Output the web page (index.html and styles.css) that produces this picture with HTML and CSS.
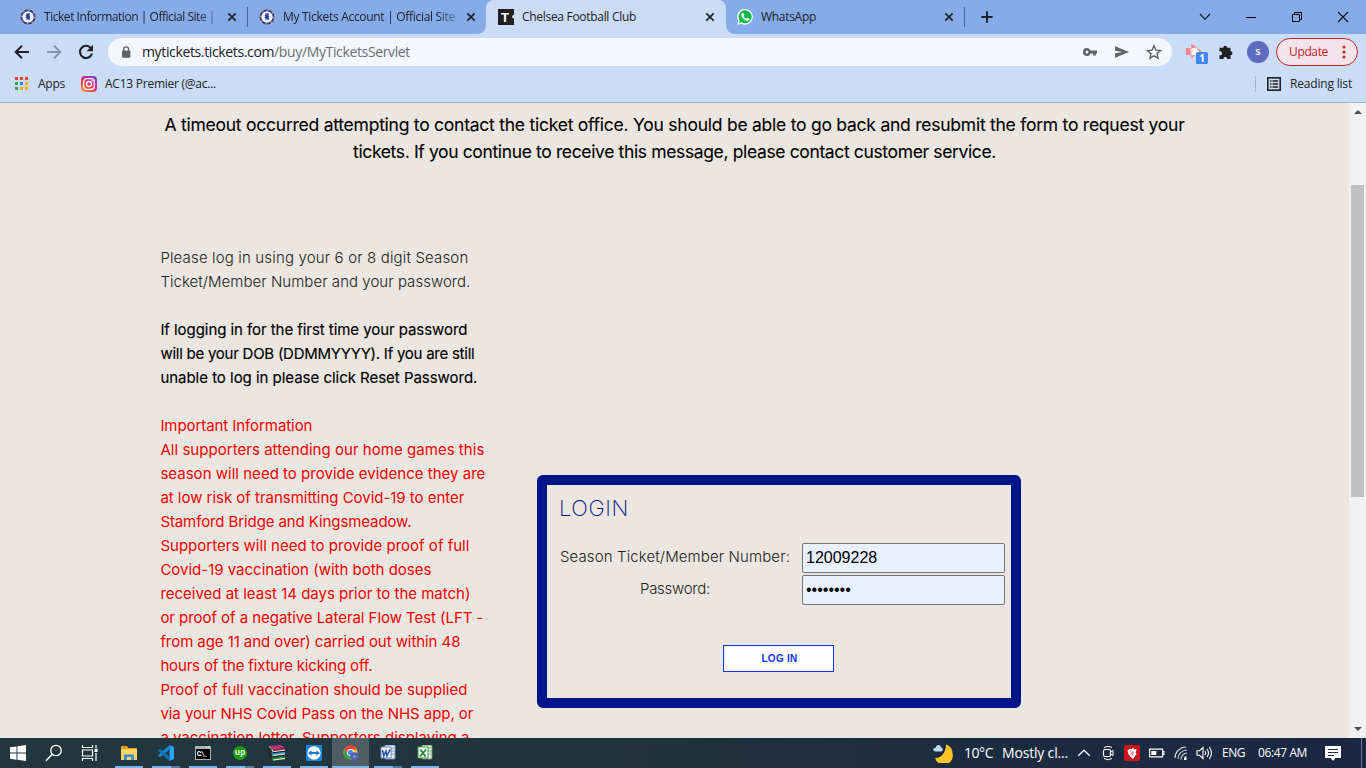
FILE: index.html
```html
<!DOCTYPE html>
<html lang="en">
<head>
<meta charset="utf-8">
<title>Chelsea Football Club</title>
<link rel="stylesheet" href="styles.css">
</head>
<body>
<svg class="defs" width="0" height="0">
  <symbol id="close" viewBox="0 0 10 10"><path d="M1.3 1.3l7.4 7.4M8.7 1.3L1.3 8.7" stroke="#202124" stroke-width="1.7"/></symbol>
  <symbol id="crest" viewBox="0 0 16 16"><circle cx="8" cy="8" r="8" fill="#d9d3e4"/><circle cx="8" cy="8" r="6.700" fill="none" stroke="#34407f" stroke-width="2"/><circle cx="8" cy="8" r="6.700" fill="none" stroke="#c3a58c" stroke-width="1.600" stroke-dasharray="1.300 3.960"/><circle cx="8" cy="8" r="5.300" fill="#f3f3fa"/><path d="M6.300 4.300l1.700.5 1.300-1 .8 1.200-1 1.200 1.400 1-1 1 .7 1.800-1.300 1.500-.7-1.500-2 1.200.4-2.200-1.200-.5 1-1.500-.9-.8 1.100-.4z" fill="#2343a5"/></symbol>
</svg>

<header class="chrome">
  <div class="tabs">
    <div class="tab sep"><svg class="fav"><use href="#crest"/></svg><div class="title fade"><span data-w="171">Ticket Information | Official Site |</span></div><svg class="x"><use href="#close"/></svg></div>
    <div class="tab"><svg class="fav"><use href="#crest"/></svg><div class="title fade"><span data-w="172">My Tickets Account | Official Site</span></div><svg class="x"><use href="#close"/></svg></div>
    <div class="tab active"><svg class="fav" viewBox="0 0 16 16"><path d="M0 0h16v16H0z" fill="#231f20"/><text x="3" y="12.500" font-family="Liberation Sans" font-size="13" font-weight="700" fill="#fff">T</text><path d="M16 6a1.800 1.800 0 0 0 0 3.600z" fill="#fff"/></svg><div class="title"><span data-w="114">Chelsea Football Club</span></div><svg class="x"><use href="#close"/></svg></div>
    <div class="tab sep"><svg class="fav" viewBox="0 0 16 16"><path d="M8.200 0A7.800 7.800 0 1 1 4.400 14.700L.1 16l1.200-4.200A7.800 7.800 0 0 1 8.200 0z" fill="#fff"/><path d="M8.200 1.300A6.500 6.500 0 1 1 4.700 13.300l-2.700.8.8-2.600A6.500 6.500 0 0 1 8.200 1.300z" fill="#12b94b"/><path d="M5.300 4.100l1.200-.1.900 2-.8 1c.7 1.400 1.500 2.200 3 2.800l1-1.100 1.900 1c.1 1.600-1.300 2.300-2.500 2C7 11.100 4.700 8.700 4.300 6.200c-.1-.9.300-1.700 1-2.100z" fill="#fff"/></svg><div class="title"><span data-w="55">WhatsApp</span></div><svg class="x"><use href="#close"/></svg></div>
    <svg class="plus" viewBox="0 0 12 12"><path d="M6 .3v11.400M.3 6h11.400" stroke="#202124" stroke-width="2"/></svg>
    <div class="window">
      <svg width="12" height="12" viewBox="0 0 12 12"><path d="M1 3l5 5.300L11 3" fill="none" stroke="#111" stroke-width="1.100"/></svg>
      <svg width="12" height="12" viewBox="0 0 12 12"><path d="M1 6.500h10" stroke="#000"/></svg>
      <svg width="12" height="12" viewBox="0 0 12 12"><path d="M1.500 3.500h7v7h-7zM3.500 3.500v-2h7v7h-2" fill="none" stroke="#000"/></svg>
      <svg width="12" height="12" viewBox="0 0 12 12"><path d="M1 1l10 10M11 1L1 11" stroke="#111" stroke-width="1.100"/></svg>
    </div>
  </div>

  <div class="toolbar">
    <svg width="16" height="16" viewBox="0 0 16 16"><path d="M15 8H2M8 1.700L1.700 8 8 14.300" fill="none" stroke="#202124" stroke-width="2"/></svg>
    <svg width="16" height="16" viewBox="0 0 16 16"><path d="M1 8h13M8 1.700L14.300 8 8 14.300" fill="none" stroke="#8695ae" stroke-width="2"/></svg>
    <svg width="16" height="16" viewBox="0 0 16 16"><path d="M13.200 4.500A6.100 6.100 0 1 0 14 9.500" fill="none" stroke="#202124" stroke-width="2.100"/><path d="M15 .8v6.400H8.600z" fill="#202124"/></svg>
    <div class="omnibox">
      <svg class="lock" width="10" height="13" viewBox="0 0 10 13"><rect x="1" y="4.500" width="8.400" height="7.300" rx="1" fill="#5f6368"/><path d="M2.700 5V3.300a2.400 2.400 0 0 1 4.900 0V5" fill="none" stroke="#5f6368" stroke-width="1.300"/></svg>
      <span class="url" data-w="268">mytickets.tickets.com<i>/buy/MyTicketsServlet</i></span>
      <svg width="16" height="16" viewBox="0 0 16 16"><path fill-rule="evenodd" d="M5 4a4 4 0 1 0 3.600 5.500H11v2h2.800v-2H15v-3H8.600A4 4 0 0 0 5 4zm0 2.500a1.500 1.500 0 1 1 0 3 1.500 1.500 0 0 1 0-3z" fill="#5f6368"/></svg>
      <svg width="16" height="16" viewBox="0 0 16 16"><path d="M1 2.300L15 8 1 13.700V9.300L9 8 1 6.700z" fill="#5f6368"/></svg>
      <svg width="16" height="16" viewBox="0 0 16 16"><path d="M8 1.800l1.900 4.300 4.700.4L11 9.600l1.100 4.600L8 11.800l-4.100 2.400L5 9.600 1.400 6.500l4.700-.4z" fill="none" stroke="#5f6368" stroke-width="1.400"/></svg>
    </div>
    <svg class="ext" width="23" height="22" viewBox="0 0 23 22"><path d="M0 4h4v7H0zM5 0l6 3.500-6 1.500zM11 4l5 3.500-4 2zM4 10l5 1-3 3z" fill="#f7848a"/><path d="M4 5l5-1.500L13 7v4H5z" fill="#fff"/><path d="M4 4h1.500v7H4z" fill="#f8b4b8"/><rect x="10" y="8" width="12" height="12" rx="1.500" fill="#4285f4"/><text x="13.200" y="18" fill="#fff" font-size="10" font-weight="700" font-family="Open Sans">1</text></svg>
    <svg class="puzzle" width="16" height="16" viewBox="0 0 16 16"><path d="M1.500 3.700h3.700a2 2 0 1 1 4 0h3.300v3.600a2 2 0 1 1 0 4V15H9.200a1.900 1.900 0 1 0-3.800 0H1.500v-3.800a2 2 0 1 0 0-3.800z" fill="#202124"/></svg>
    <div class="avatar">s</div>
    <div class="update"><span data-w="39">Update</span><svg width="4" height="14" viewBox="0 0 4 14"><g fill="#c5221f"><circle cx="2" cy="2" r="1.500"/><circle cx="2" cy="7" r="1.500"/><circle cx="2" cy="12" r="1.500"/></g></svg></div>
  </div>

  <div class="bookmarks">
    <svg width="14" height="14" viewBox="0 0 14 14"><path d="M0 0h3v3H0zM5 0h3v3H5zM10 0h3v3h-3z" fill="#ea4335"/><path d="M0 5h3v3H0zM0 10h3v3H0z" fill="#34a04f"/><path d="M5 5h3v3H5z" fill="#2b83f5"/><path d="M10 5h3v3h-3zM5 10h3v3H5zM10 10h3v3h-3z" fill="#f9ab00"/></svg>
    <span class="apps" data-w="27">Apps</span>
    <svg class="insta" width="16" height="16" viewBox="0 0 16 16"><defs><linearGradient id="ig" x1="0" y1="1" x2=".8" y2="0"><stop stop-color="#fdc252"/><stop offset=".35" stop-color="#f34c3c"/><stop offset=".65" stop-color="#cb2d8c"/><stop offset="1" stop-color="#7640cc"/></linearGradient></defs><rect width="16" height="16" rx="4" fill="url(#ig)"/><rect x="2.700" y="2.700" width="10.600" height="10.600" rx="3" fill="none" stroke="#fff" stroke-width="1.200"/><circle cx="8" cy="8" r="2.500" fill="none" stroke="#fff" stroke-width="1.300"/><circle cx="11.200" cy="4.800" r=".8" fill="#fff"/></svg>
    <span class="ac" data-w="111">AC13 Premier (@ac...</span>
    <div class="reading"><svg width="14" height="14" viewBox="0 0 14 14"><rect x=".8" y=".8" width="12.400" height="12.400" fill="none" stroke="#202124" stroke-width="1.600"/><path d="M3 4h1.500M5.500 4H11M3 7h1.500M5.500 7H11M3 10h1.500M5.500 10H11" stroke="#202124" stroke-width="1.500"/></svg><span data-w="62">Reading list</span></div>
  </div>
</header>

<main class="page">
  <div class="content">
    <h1 class="message"><span data-w="1020">A timeout occurred attempting to contact the ticket office. You should be able to go back and resubmit the form to request your</span><br><span data-w="643">tickets. If you continue to receive this message, please contact customer service.</span></h1>
    <div class="columns">
      <section class="notes">
        <p class="light"><span data-w="308">Please log in using your 6 or 8 digit Season</span><br><span data-w="310">Ticket/Member Number and your password.</span></p>
        <p><span data-w="307">If logging in for the first time your password</span><br><span data-w="314">will be your DOB (DDMMYYYY). If you are still</span><br><span data-w="317">unable to log in please click Reset Password.</span></p>
        <p class="red"><span data-w="152">Important Information</span><br><span data-w="324">All supporters attending our home games this</span><br><span data-w="325">season will need to provide evidence they are</span><br><span data-w="304">at low risk of transmitting Covid-19 to enter</span><br><span data-w="251">Stamford Bridge and Kingsmeadow.</span><br><span data-w="309">Supporters will need to provide proof of full</span><br><span data-w="271">Covid-19 vaccination (with both doses</span><br><span data-w="310">received at least 14 days prior to the match)</span><br><span data-w="323">or proof of a negative Lateral Flow Test (LFT -</span><br><span data-w="300">from age 11 and over) carried out within 48</span><br><span data-w="212">hours of the fixture kicking off.</span><br><span data-w="307">Proof of full vaccination should be supplied</span><br><span data-w="313">via your NHS Covid Pass on the NHS app, or</span><br><span data-w="309">a vaccination letter. Supporters displaying a</span></p>
      </section>
      <form class="login">
        <h2><span data-w="70">LOGIN</span></h2>
        <div class="fields">
          <label for="num"><span data-w="230">Season Ticket/Member Number:</span></label><input id="num" value="12009228">
          <label for="pw"><span data-w="70">Password:</span></label><input id="pw" type="password" value="12345678">
        </div>
        <button type="button"><span data-w="36">LOG IN</span></button>
      </form>
    </div>
  </div>
  <div class="scrollbar"><i class="up"></i><div class="thumb"></div><i class="down"></i></div>
</main>

<footer class="taskbar">
  <div class="start">
    <svg width="16" height="16" viewBox="0 0 16 16"><path d="M0 2.300L6.500 1.400v6.200H0zM7.400 1.200L16 0v7.600H7.400zM0 8.500h6.500v6.200L0 13.800zM7.400 8.500H16V16l-8.600-1.200z" fill="#fff"/></svg>
    <svg width="18" height="18" viewBox="0 0 18 18"><circle cx="11" cy="6.500" r="5.200" fill="none" stroke="#fff" stroke-width="1.300"/><path d="M7.200 10.300L1 16.700" stroke="#fff" stroke-width="1.500"/></svg>
    <svg width="18" height="16" viewBox="0 0 18 16"><path d="M1.500 0v2.500h10V0M1.500 16v-2.500h10V16M1.500 5h10v6h-10zM15 0v3.500M15 8v8" fill="none" stroke="#fff" stroke-width="1.200"/><path d="M13.500 4h3v3h-3z" fill="#fff"/></svg>
  </div>
  <div class="apps-bar">
    <div class="app"><svg width="18" height="16" viewBox="0 0 18 16"><path d="M1 1h6l1.500 2H17v3H1z" fill="#e0a015"/><path d="M1 4h16v11H1z" fill="#fcd462"/><path d="M4 15V9.500h10V15h-2.800v-3H6.800v3z" fill="#3c8ad2"/></svg></div>
    <div class="app multi"><svg width="18" height="18" viewBox="0 0 18 18"><path d="M12.500 1L17 3v12l-4.500 2z" fill="#2ea4ef"/><path d="M12.500 1v4.500L3 13.200l-2-1.600L12.500 1z" fill="#168ad8"/><path d="M12.500 17v-4.500L3 4.800 1 6.400 12.500 17z" fill="#1272bd"/></svg></div>
    <div class="app"><svg width="16" height="14" viewBox="0 0 16 14"><path d="M0 0h16v14H0z" fill="#aeb1b5"/><path d="M1 3h14v10H1z"/><path d="M11 1h1M13 1h1" stroke="#fff"/><text x="1.800" y="9.500" font-family="Liberation Mono" font-size="7" font-weight="700" fill="#fff" textLength="10">C:\_</text></svg></div>
    <div class="app multi"><svg width="14" height="14" viewBox="0 0 14 14"><circle cx="7" cy="7" r="7" fill="#1c9e07"/><text x="2" y="9.300" font-family="Lato" font-size="8.500" font-weight="700" fill="#fff" textLength="10">up</text></svg></div>
    <div class="app"><svg width="17" height="16" viewBox="0 0 17 16"><path d="M1 1l12-1 4 3-12 2z" fill="#b53576"/><path d="M1 1l4 4v2L1 4z" fill="#e5dcca"/><path d="M5 5l12-2v2L5 7z" fill="#84204f"/><path d="M1 5l4 3 12-2v3L5 11 1 8z" fill="#319bc5"/><path d="M1 9l4 3 12-2v4L5 16l-4-3z" fill="#187c35"/><path d="M5 6.800l12-1.600M5 10.800l12-1.600M5 15l12-1.600" stroke="#f1e8cf" stroke-width="1.200"/><path d="M5 7.800l12-1.600M5 11.800l12-1.600" stroke="#1a1416"/><path d="M1.500 2.500v11M3 3.500v11" stroke="#251c1b" stroke-width="1.300"/></svg></div>
    <div class="app"><svg width="16" height="16" viewBox="0 0 16 16"><rect width="16" height="16" rx="1" fill="#1386de"/><circle cx="8" cy="8" r="6.700" fill="#fff"/><path d="M2 8l3.600-2.800V7h4.800V5.200L14 8l-3.600 2.800V9H5.600v1.800z" fill="#147bd1"/></svg></div>
    <div class="app current"><svg width="16" height="16" viewBox="0 0 16 16"><circle cx="7.500" cy="7.500" r="7" fill="#f7c32c"/><path d="M1.400 4A7 7 0 0 1 14 4.500H7.500L4.800 9z" fill="#e94235"/><path d="M1.400 4a7 7 0 0 0 6 10.500L10 10H5z" fill="#34a853"/><circle cx="7.500" cy="7.500" r="3.400" fill="#fff"/><circle cx="7.500" cy="7.500" r="2.600" fill="#4285f4"/><circle cx="11.500" cy="11.500" r="4.300" fill="#5260b5"/><circle cx="11.500" cy="11.500" r="1.200" fill="#98a1dc"/></svg></div>
    <div class="app multi"><svg width="16" height="16" viewBox="0 0 16 16"><path d="M5 0h10v14H5z" fill="#e9eef8" stroke="#6b82b6"/><path d="M10 3h4M10 6h4M10 9h4" stroke="#7c91c1"/><path d="M1 2h10v11H1z" fill="#f4f7fc" stroke="#6f87b9"/><path d="M2.500 5l1.300 6L6 6l1 5 3-6.500" fill="none" stroke="#234fa3" stroke-width="1.500"/></svg></div>
    <div class="app"><svg width="16" height="16" viewBox="0 0 16 16"><path d="M5 0h10v14H5z" fill="#e9f3e7" stroke="#519055"/><path d="M10 3h4M10 6h4M10 9h4" stroke="#73a974"/><path d="M1 2h10v11H1z" fill="#f0f8ef" stroke="#4c9250"/><path d="M3.500 4.500l5 7M9 4.500l-6 7" fill="none" stroke="#248137" stroke-width="1.800"/></svg></div>
  </div>
  <div class="tray">
    <svg width="20" height="19" viewBox="0 0 20 19"><path d="M13 .5c4 1.200 6.500 4.500 6.500 8.500A9 9 0 0 1 2 14C8.500 14.500 13 8 13 .5z" fill="#fcc425"/><path d="M3 7.500C-1 7.500-.2 3.400 2.500 4 3 0 8 .2 8 3.500c2.600.3 2.300 4 0 4z" fill="#bddcf2"/></svg>
    <span class="big" data-w="29">10°C</span>
    <span class="big" data-w="66">Mostly cl...</span>
    <svg width="14" height="14" viewBox="0 0 14 14"><path d="M1.300 9.800L7 4.200l5.700 5.600" fill="none" stroke="#fff" stroke-width="1.200"/></svg>
    <svg width="13" height="16" viewBox="0 0 13 16"><rect x="1.500" y="4.500" width="7" height="7" rx="1.500" fill="none" stroke="#fff" stroke-width="1.200"/><path d="M8.500 7l2.500-1.500v5L8.500 9M2 2.500q4-2.500 8 0M2 13.500q4 2.500 8 0" fill="none" stroke="#fff"/></svg>
    <svg width="16" height="16" viewBox="0 0 16 16"><rect width="16" height="16" rx="2" fill="#cc151c"/><path d="M3.500 5.500L6 3.500l1.500 1L9 2.500l1 2 2.500-.5-.8 3.500.8 1.500-3.500 5-3-2.500-1.800-3z" fill="#fff"/><path d="M6 5l1.500 3M9 6l-1 5M6 9l4-1" stroke="#d55" stroke-width=".7"/></svg>
    <svg width="16" height="10" viewBox="0 0 16 10"><path d="M.6 1.100h13v7.800H.6zM14 3.500h1v3h-1" fill="none" stroke="#fff" stroke-width="1.100"/><path d="M2.300 3h5v4h-5z" fill="#fff"/></svg>
    <svg width="14" height="14" viewBox="0 0 14 14"><path d="M1 12C1 6 6 1 12 1M4 13C4 8 8 4 13 4M7 13.500C7 10 10 7 13 7" fill="none" stroke="#d4d8df" stroke-width="1.100"/><path d="M10 14v-1.500a2.500 2.500 0 0 1 2.500-2.300V14z" fill="#fff"/></svg>
    <svg width="17" height="14" viewBox="0 0 17 14"><path d="M1 4.700h2.500L7 1.500v11L3.500 9.300H1zM9 5q1.300 2 0 4M11 3q3 4 0 8M13.300 1q4.300 6 0 12" fill="none" stroke="#fff" stroke-width="1.100"/></svg>
    <span data-w="23">ENG</span>
    <span data-w="49">06:47 AM</span>
    <svg width="16" height="17" viewBox="0 0 16 17"><path d="M0 1h16v12h-5.500L8 16l-2.500-3H0z" fill="#fff"/><path d="M3 4.500h10M3 7.500h10M3 10.500h6" stroke="#1b2a42" stroke-width="1.100"/></svg>
    <i class="peek"></i>
  </div>
</footer>
<script src="fit.js"></script>
</body>
</html>
```
FILE: styles.css
```css
* { box-sizing: border-box; }
body { margin: 0; width: 1366px; height: 768px; overflow: hidden; display: flex; flex-direction: column; font: 12px/16px "Open Sans", "Noto Sans", sans-serif; color: #202124; }
svg { display: block; flex: none; }
.defs { position: absolute; }
[data-w] { white-space: nowrap; }

.chrome { height: 103px; flex: none; background: #cadcf6; border-bottom: 1px solid #a2b1ca; }
.tabs { height: 34px; background: #85ace9; display: flex; align-items: center; padding-left: 8px; }
.tab { width: 239px; height: 34px; display: flex; align-items: center; padding-left: 12px; flex: none; }
.tab.sep { background: linear-gradient(#4c648b, #4c648b) right center / 1px 20px no-repeat; }
.tab.sep:first-child { width: 240px; }
.tab.sep:first-child + .tab { width: 238px; padding-left: 11px; }
.tab.active { width: 240px; margin-right: -1px; background: #cadcf6; border-radius: 8px 8px 0 0; }
/* outward curves where the active tab meets the toolbar */
.tab:has(+ .active) { background: radial-gradient(circle at 0 0, #0000 7.5px, #cadcf6 8px) right bottom / 8px 8px no-repeat; }
.active + .tab.sep { width: 240px; background: radial-gradient(circle at 100% 0, #0000 7.5px, #cadcf6 8px) 1px bottom / 8px 8px no-repeat, linear-gradient(#4c648b, #4c648b) right center / 1px 20px no-repeat; }
.fav { width: 16px; height: 16px; margin-right: 8px; }
.title { width: 183px; overflow: hidden; white-space: nowrap; }
.title.fade { -webkit-mask-image: linear-gradient(90deg, #000 153px, #0006 172px); mask-image: linear-gradient(90deg, #000 153px, #0006 172px); }
.x { width: 10px; height: 10px; }
.plus { width: 12px; height: 12px; margin-left: 16px; }
.window { display: flex; gap: 34px; margin-left: auto; padding-right: 17px; height: 28px; align-items: center; }

.toolbar { height: 36px; display: flex; align-items: center; padding-left: 14px; gap: 16px; }
.omnibox { width: 1064px; height: 28px; margin-left: -2px; border-radius: 14px; background: #f4f7fd; display: flex; align-items: center; gap: 16px; padding: 0 10px 0 13px; font-size: 14px; }
.omnibox .lock { margin-right: -5px; }
.url { margin-right: auto; color: #202124; }
.url i { font-style: normal; color: #6b7078; }
.ext { margin: 5px -6px 0 -2px; }
.puzzle { margin: 0 -3px 0 -1px; }
.avatar { width: 22px; height: 22px; border-radius: 50%; background: #5c6bc0; color: #fff; text-align: center; font-size: 11px; font-weight: 600; line-height: 20px; }
.update { width: 82px; height: 28px; margin-left: -9px; border: 1px solid #c5221f; border-radius: 14px; background: #f2e4ea; color: #c5221f; display: flex; align-items: center; justify-content: space-between; padding: 0 11px 0 12px; }

.bookmarks { height: 30px; display: flex; align-items: center; padding: 0 14px 2px 15px; }
.apps { margin-left: 9px; }
.insta { margin: 0 8px 0 16px; }
.reading { margin-left: auto; height: 16px; border-left: 1px solid #9cb1d3; padding-left: 11px; display: flex; align-items: center; gap: 9px; }

.page { height: 635px; flex: none; display: flex; background: #ebe6e0; overflow: hidden; }
.content { width: 1349px; height: 635px; overflow: hidden; color: #000; font-family: Inter, sans-serif; }
.message { margin: 8px 0 0; font: 400 17.5px/27px Inter, sans-serif; text-align: center; -webkit-text-stroke: .1px; }
.columns { display: flex; padding: 81px 0 0 160.4px; align-items: flex-start; }
.notes { width: 376.6px; flex: none; font-size: 15px; line-height: 24px; }
.notes p { margin: 0 0 24px; -webkit-text-stroke: .15px; }
.notes p.light { font-weight: 300; color: #222; -webkit-text-stroke: 0; }
.notes p.red { color: #fa0000; -webkit-text-stroke: 0; }
.login { width: 484px; height: 233px; margin-top: 229px; border: 10px solid #001489; border-radius: 6px; padding: 9px 6px 0 12px; display: flex; flex-direction: column; }
.login h2 { margin: 0; font: 200 22px/28px Inter, sans-serif; color: #001489; }
.fields { margin-top: 21px; display: grid; grid-template-columns: 232px 203px; grid-auto-rows: 30px; row-gap: 2px; justify-content: space-between; }
.fields label { font-size: 15px; font-weight: 300; line-height: 28px; text-align: center; color: #222; }
.fields input { width: 203px; height: 30px; border: 1px solid #767676; border-radius: 2px; background: #e8f0fe; padding: 0 3px; font: 16px "Liberation Sans", sans-serif; color: #000; }
.login button { width: 111px; height: 27px; margin: 40px 0 0 164px; padding: 0 0 0 2px; border: 1px solid #0a36f0; background: #fff; color: #0a36f0; font: 700 10px/25px "Liberation Sans", sans-serif; }

.scrollbar { width: 17px; background: #f1f1f1; display: flex; flex-direction: column; align-items: center; justify-content: space-between; padding: 7px 0; }
.scrollbar i { border: 4px solid transparent; }
.scrollbar .up { border-top: 0; border-bottom-color: #505050; }
.scrollbar .down { border-bottom: 0; border-top-color: #505050; }
.thumb { width: 13px; height: 312px; margin: 0 0 159px; background: #c1c1c1; }

.taskbar { height: 30px; flex: none; display: flex; background: linear-gradient(90deg, #21373f, #21353f 40%, #1c2c3f 70%, #1a2744); color: #fff; }
.start { width: 110px; display: grid; grid-template-columns: repeat(3, 36px); align-items: center; justify-items: center; }
.apps-bar { display: flex; }
.app { width: 37px; height: 30px; display: flex; align-items: center; justify-content: center; background: linear-gradient(#76b9ed, #76b9ed) 5px bottom / 28px 2px no-repeat; }
.app.multi { background: linear-gradient(90deg, #76b9ed 19px, #4f7fa5 19px) 5px bottom / 28px 2px no-repeat; }
.app.current { background: linear-gradient(#76b9ed, #76b9ed) 0 bottom / 37px 2px no-repeat, #4d5e65; }
.tray { margin-left: auto; width: 433px; display: grid; grid-template-columns: 31px 38px 75px 25px 22px 25px 25px 22px 26px 36px 67px 36px 1px; align-items: center; }
.tray .big { font-size: 14px; }
.peek { height: 30px; background: #68758a; }
```
FILE: fit.js
```js
document.querySelectorAll('[data-w]').forEach(function (el) {
  var range = document.createRange();
  range.selectNodeContents(el);
  var natural = range.getBoundingClientRect().width;
  var count = el.textContent.length;
  el.style.letterSpacing = ((Number(el.dataset.w) - natural) / count).toFixed(3) + 'px';
});
```
